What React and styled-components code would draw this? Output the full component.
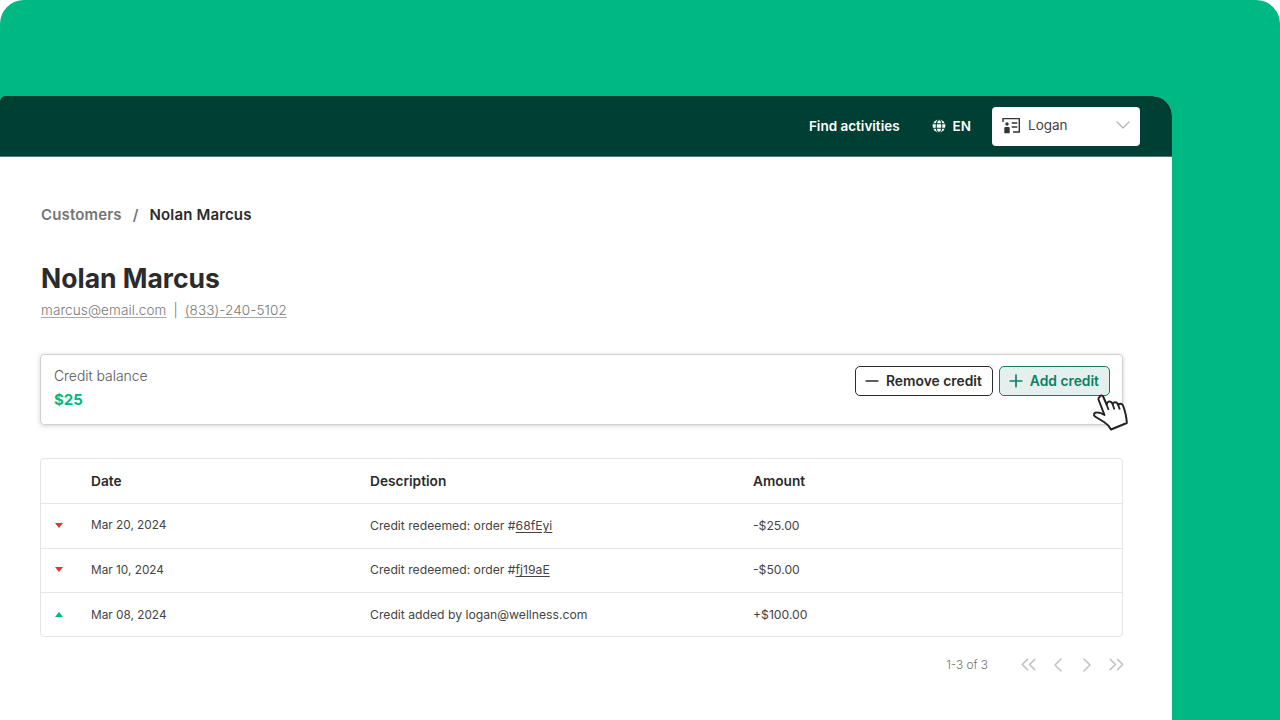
import React from "react";
import styled, { createGlobalStyle } from "styled-components";
import { ChevronDown, ChevronLeft, ChevronRight, ChevronsLeft, ChevronsRight, Minus, Plus } from "lucide-react";

const GlobalStyle = createGlobalStyle`
  html, body {
    margin: 0;
    height: 720px;
    overflow: hidden;
    background: #fff;
    font-family: Inter, "Liberation Sans", sans-serif;
    color: #2b2b2b;
  }
`;

const rows = [
  { id: 1, dir: "down", date: "Mar 20, 2024", text: "Credit redeemed: order #", code: "68fEyi", amount: "-$25.00" },
  { id: 2, dir: "down", date: "Mar 10, 2024", text: "Credit redeemed: order #", code: "fj19aE", amount: "-$50.00" },
  { id: 3, dir: "up", date: "Mar 08, 2024", text: "Credit added by logan@wellness.com", amount: "+$100.00" },
];

const Backdrop = styled.div`
  width: 1280px;
  height: 720px;
  box-sizing: border-box;
  padding-top: 96px;
  background: #00b884;
  border-radius: 24px 24px 0 0;
  overflow: hidden;
`;

const Window = styled.div`
  width: 1172px;
  height: 624px;
  background: #fff;
  border-radius: 5px 20px 0 0;
  overflow: hidden;
`;

const TopBar = styled.header`
  height: 61px;
  box-sizing: border-box;
  padding: 0 32px 0 0;
  background: #003f33;
  border-bottom: 1px solid #4f7a6f;
  display: flex;
  align-items: center;
  justify-content: flex-end;
  color: #fff;
  font-size: 13.5px;
  font-weight: 600;
`;

const TopLink = styled.span`
  margin-right: 32px;
`;

const Lang = styled.span`
  display: flex;
  align-items: center;
  gap: 7px;
  margin-right: 21px;
`;

const UserSelect = styled.div`
  width: 148px;
  height: 39px;
  box-sizing: border-box;
  padding: 0 5px 2px 10px;
  background: #fff;
  border-radius: 4px;
  display: flex;
  align-items: center;
  gap: 8px;
  color: #444;
  font-size: 13.5px;
  font-weight: 400;
  svg:last-child {
    margin-left: auto;
    color: #b3b3b3;
  }
`;

const Content = styled.main`
  padding: 49px 49px 0 40px;
`;

const Crumbs = styled.nav`
  margin-left: 1px;
  display: flex;
  gap: 11px;
  font-size: 15px;
  letter-spacing: 0.15px;
  font-weight: 600;
  line-height: 18px;
`;

const Crumb = styled.span`
  color: ${(p) => (p.$muted ? "#757575" : "#2b2b2b")};
`;

const Title = styled.h1`
  margin: 37px 0 0 1px;
  font-size: 26.5px;
  line-height: 34px;
  font-weight: 700;
`;

const Contact = styled.div`
  margin: 6px 0 0 1px;
  display: flex;
  gap: 7px;
  font-size: 13.5px;
  letter-spacing: 0.1px;
  line-height: 18px;
  font-weight: 300;
  color: #777;
`;

const ContactLink = styled.span`
  text-decoration: underline;
  text-underline-offset: 2px;
  text-decoration-color: #aaa;
`;

const BalanceCard = styled.section`
  position: relative;
  margin-top: 35px;
  height: 71px;
  box-sizing: border-box;
  padding: 0 12px 0 13px;
  border: 1px solid #cfcfcf;
  border-radius: 4px;
  box-shadow: 0 1px 5px rgba(0, 0, 0, 0.18);
  display: flex;
  align-items: flex-start;
  justify-content: space-between;
`;

const BalanceLabel = styled.div`
  margin-top: 13px;
  font-size: 13.9px;
  line-height: 16px;
  font-weight: 300;
  color: #555;
`;

const BalanceValue = styled.div`
  margin-top: 6px;
  font-size: 15px;
  line-height: 19px;
  font-weight: 700;
  color: #00b884;
`;

const Actions = styled.div`
  display: flex;
  gap: 6px;
  margin-top: 11px;
`;

const ActionButton = styled.button`
  height: 30px;
  padding: 0 10px 0 6px;
  box-sizing: border-box;
  display: flex;
  align-items: center;
  gap: 4px;
  border-radius: 5px;
  font-family: inherit;
  font-size: 13.85px;
  font-weight: 600;
  border: 1px solid ${(p) => (p.$primary ? "#0d7f64" : "#2b2b2b")};
  background: ${(p) => (p.$primary ? "#e3f0ed" : "#fff")};
  color: ${(p) => (p.$primary ? "#0d7f64" : "#2b2b2b")};
`;

const Cursor = styled.svg`
  position: absolute;
  right: -10px;
  top: 35px;
`;

const Table = styled.section`
  margin-top: 33px;
  height: 179px;
  box-sizing: border-box;
  border: 1px solid #e4e4e4;
  border-radius: 4px;
`;

const Row = styled.div`
  display: grid;
  grid-template-columns: 50px 279px 383px 1fr;
  align-items: center;
  height: ${(p) => (p.$head ? "45px" : "44.5px")};
  box-sizing: border-box;
  padding-bottom: 1px;
  font-size: ${(p) => (p.$head ? "13.7px" : "12.2px")};
  font-weight: ${(p) => (p.$head ? 600 : 400)};
  color: ${(p) => (p.$head ? "#2b2b2b" : "#444")};
  border-bottom: ${(p) => (p.$last ? "none" : "1px solid #e6e6e6")};
`;

const DateCell = styled.span`
  font-size: 11.8px;
`;

const Arrow = styled.span`
  justify-self: start;
  margin-left: 14px;
  width: 0;
  height: 0;
  border-left: 4.500px solid transparent;
  border-right: 4.500px solid transparent;
  border-top: ${(p) => (p.$dir === "down" ? "5px solid #e0352b" : "none")};
  border-bottom: ${(p) => (p.$dir === "up" ? "5px solid #00b884" : "none")};
`;

const Code = styled.span`
  text-decoration: underline;
  text-underline-offset: 2px;
`;

const Pager = styled.div`
  margin: 15px -5.500px 0 0;
  display: flex;
  align-items: center;
  justify-content: flex-end;
  color: #c4c4c4;
  gap: 5px;
`;

const PagerText = styled.span`
  margin-right: 22.500px;
  font-size: 11.8px;
  font-weight: 300;
  color: #707070;
`;

const IdCard = () => (
  <svg width="18" height="17" viewBox="0 0 18 17" fill="none">
    <path d="M1 5V1.600H17.300V15H11" stroke="#333" strokeWidth="1.400" />
    <circle cx="5" cy="7" r="1.700" fill="#333" />
    <path d="M2.300 16.300V11a1 1 0 0 1 1-1h3.400a1 1 0 0 1 1 1v5.300z" fill="#333" />
    <path d="M9.700 6h5.600M9.700 10h5.600" stroke="#333" strokeWidth="1.400" />
  </svg>
);

const Globe = () => (
  <svg width="14" height="14" viewBox="0 0 14 14" fill="none">
    <circle cx="7" cy="7" r="6.400" fill="#fff" />
    <ellipse cx="7" cy="7" rx="2.800" ry="6.400" stroke="#003f33" strokeWidth="1.100" />
    <path d="M0.500 4.800h13M0.500 9.200h13" stroke="#003f33" strokeWidth="1.100" />
  </svg>
);

const Hand = () => (
  <Cursor width="42" height="44" viewBox="0 0 42 44">
    <path
      d="M9.500 7C10 5.200 12.600 5 13.400 7L16.600 14.500C17 11.500 20.400 10.500 21.600 12.500L22.600 14C23.300 11.600 26.500 11.500 27.600 13.800L28.200 15C29.200 13 32.500 13.500 33.200 16C35 21 36.600 26 36.800 33L21 39.500C19 36 16.500 33.500 14 32L5 26.500C3.500 25 3.600 23 6 22.600C8.500 22 11.500 23 14.500 25L8.500 9.500C8.300 8.500 8.800 7.500 9.500 7Z"
      fill="#fff"
      stroke="#222"
      strokeWidth="2"
      strokeLinejoin="round"
    />
    <path d="M16.600 14.500l2 5.500M22.600 14l1.800 5.500M28.200 15l1.600 4.500" stroke="#222" strokeWidth="1.800" fill="none" />
  </Cursor>
);

export default function App() {
  return (
    <>
      <GlobalStyle />
      <Backdrop>
        <Window>
          <TopBar>
            <TopLink>Find activities</TopLink>
            <Lang>
              <Globe />
              EN
            </Lang>
            <UserSelect>
              <IdCard />
              Logan
              <ChevronDown size={24} strokeWidth={1.200} />
            </UserSelect>
          </TopBar>
          <Content>
            <Crumbs>
              <Crumb $muted>Customers</Crumb>
              <Crumb $muted>/</Crumb>
              <Crumb>Nolan Marcus</Crumb>
            </Crumbs>
            <Title>Nolan Marcus</Title>
            <Contact>
              <ContactLink>marcus@email.com</ContactLink>
              <span>|</span>
              <ContactLink>(833)-240-5102</ContactLink>
            </Contact>
            <BalanceCard>
              <div>
                <BalanceLabel>Credit balance</BalanceLabel>
                <BalanceValue>$25</BalanceValue>
              </div>
              <Actions>
                <ActionButton>
                  <Minus size={20} strokeWidth={2} />
                  Remove credit
                </ActionButton>
                <ActionButton $primary>
                  <Plus size={20} strokeWidth={2} />
                  Add credit
                </ActionButton>
              </Actions>
              <Hand />
            </BalanceCard>
            <Table>
              <Row $head>
                <span />
                <span>Date</span>
                <span>Description</span>
                <span>Amount</span>
              </Row>
              {rows.map((r, i) => (
                <Row key={r.id} $last={i === rows.length - 1}>
                  <Arrow $dir={r.dir} />
                  <DateCell>{r.date}</DateCell>
                  <span>
                    {r.text}
                    {r.code && <Code>{r.code}</Code>}
                  </span>
                  <span>{r.amount}</span>
                </Row>
              ))}
            </Table>
            <Pager>
              <PagerText>1-3 of 3</PagerText>
              <ChevronsLeft size={25} strokeWidth={1.600} />
              <ChevronLeft size={24} strokeWidth={1.600} />
              <ChevronRight size={24} strokeWidth={1.600} />
              <ChevronsRight size={25} strokeWidth={1.600} />
            </Pager>
          </Content>
        </Window>
      </Backdrop>
    </>
  );
}
